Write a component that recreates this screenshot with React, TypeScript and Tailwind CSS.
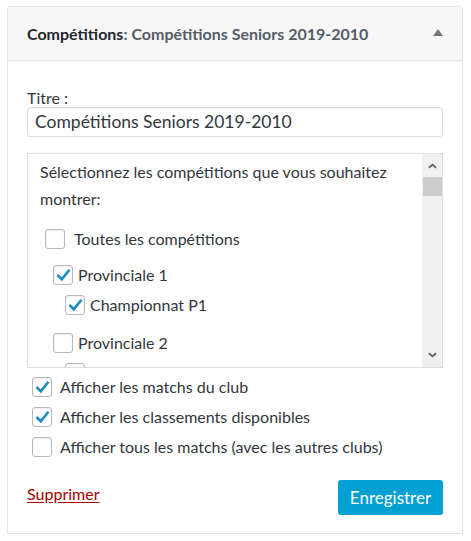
import React from 'react'

const Check = () => (
    <svg viewBox="0 0 20 20" className="h-[17px] w-[17px]">
        <path d="M4 10.5 L8 14.5 L16 4.5" fill="none" stroke="#1e8cbe" strokeWidth="3.2" strokeLinecap="square" strokeLinejoin="miter" />
    </svg>
)

const Box = ({ checked }: { checked?: boolean }) => (
    <span className="flex h-5 w-5 shrink-0 items-center justify-center rounded-[3px] border border-[#b4b9be] bg-white shadow-[inset_0_1px_2px_rgba(0,0,0,0.07)]">
        {checked && <Check />}
    </span>
)

const Row = ({ checked, label, gap, className }: { checked?: boolean; label?: string; gap: string; className?: string }) => (
    <div className={`flex items-center leading-[20px] ${gap} ${className ?? ''}`}>
        <Box checked={checked} />
        {label && <span>{label}</span>}
    </div>
)

const App = () => {
    return (
        <div className="min-h-[541px] bg-white pl-[7px] pr-2 pt-[6px] text-[16px] text-[#32373c]" style={{ fontFamily: 'Lato, "Open Sans", sans-serif' }}>
            <div className="w-[456px]">
                <div className="flex h-[55px] items-center justify-between rounded-t-[3px] border border-[#e5e5e5] bg-[#f7f7f7] pl-[19px] pr-[19px] shadow-[0_1px_1px_rgba(0,0,0,0.04)]">
                    <div className="text-[16px] font-bold text-[#23282d]">
                        Compétitions<span className="text-[#555d66]">: Compétitions Seniors 2019-2010</span>
                    </div>
                    <svg viewBox="0 0 10 7" className="mb-[3px] h-[7px] w-[10px]">
                        <path d="M0 7 L5 0 L10 7 Z" fill="#72777c" />
                    </svg>
                </div>

                <div className="border-x border-b border-[#e5e5e5] px-[19px] pb-[18px] pt-[28px]">
                    <div className="leading-[18px] text-[#32373c]">Titre :</div>
                    <div className="flex h-[30px] items-center rounded-[3px] border border-[#ddd] px-[7px] text-[17.5px] text-[#32373c] shadow-[inset_0_1px_2px_rgba(0,0,0,0.07)]">
                        Compétitions Seniors 2019-2010
                    </div>

                    <div className="mt-[16px] flex h-[215px] border border-[#ddd]">
                        <div className="flex-1 overflow-hidden pl-[12px] pt-[4px]">
                            <p className="leading-[27px]">Sélectionnez les compétitions que vous souhaitez montrer:</p>
                            <Row label="Toutes les compétitions" gap="gap-[9px]" className="ml-[5px] mt-[17px]" />
                            <Row checked label="Provinciale 1" gap="gap-[5px]" className="ml-[13px] mt-[16px]" />
                            <Row checked label="Championnat P1" gap="gap-[5px]" className="ml-[25px] mt-[10px]" />
                            <Row label="Provinciale 2" gap="gap-[5px]" className="ml-[13px] mt-[18px]" />
                            <Row gap="gap-[5px]" className="ml-[25px] mt-[10px]" />
                        </div>
                        <div className="flex w-[20px] flex-col items-center bg-[#f0f0f0]">
                            <svg viewBox="0 0 10 6" className="mt-[9px] h-[6px] w-[9px]">
                                <path d="M1 5 L5 1.5 L9 5" fill="none" stroke="#606060" strokeWidth="2" />
                            </svg>
                            <div className="mt-[8px] h-[19px] w-[19px] bg-[#cdcdcd]" />
                            <div className="flex-1" />
                            <svg viewBox="0 0 10 6" className="mb-[9px] h-[6px] w-[9px]">
                                <path d="M1 1 L5 4.5 L9 1" fill="none" stroke="#606060" strokeWidth="2" />
                            </svg>
                        </div>
                    </div>

                    <div className="ml-[5px] mt-[9px] flex flex-col gap-[10px]">
                        <Row checked label="Afficher les matchs du club" gap="gap-[8px]" />
                        <Row checked label="Afficher les classements disponibles" gap="gap-[8px]" />
                        <Row label="Afficher tous les matchs (avec les autres clubs)" gap="gap-[8px]" />
                    </div>

                    <div className="mt-[23px] flex items-start justify-between">
                        <a href="#" className="mt-[4px] leading-[20px] text-[#a00] underline underline-offset-2">Supprimer</a>
                        <button className="h-[35px] w-[105px] rounded-[3px] bg-[#00a0d2] text-[17px] text-white">Enregistrer</button>
                    </div>
                </div>
            </div>
        </div>
    )
}

export default App
